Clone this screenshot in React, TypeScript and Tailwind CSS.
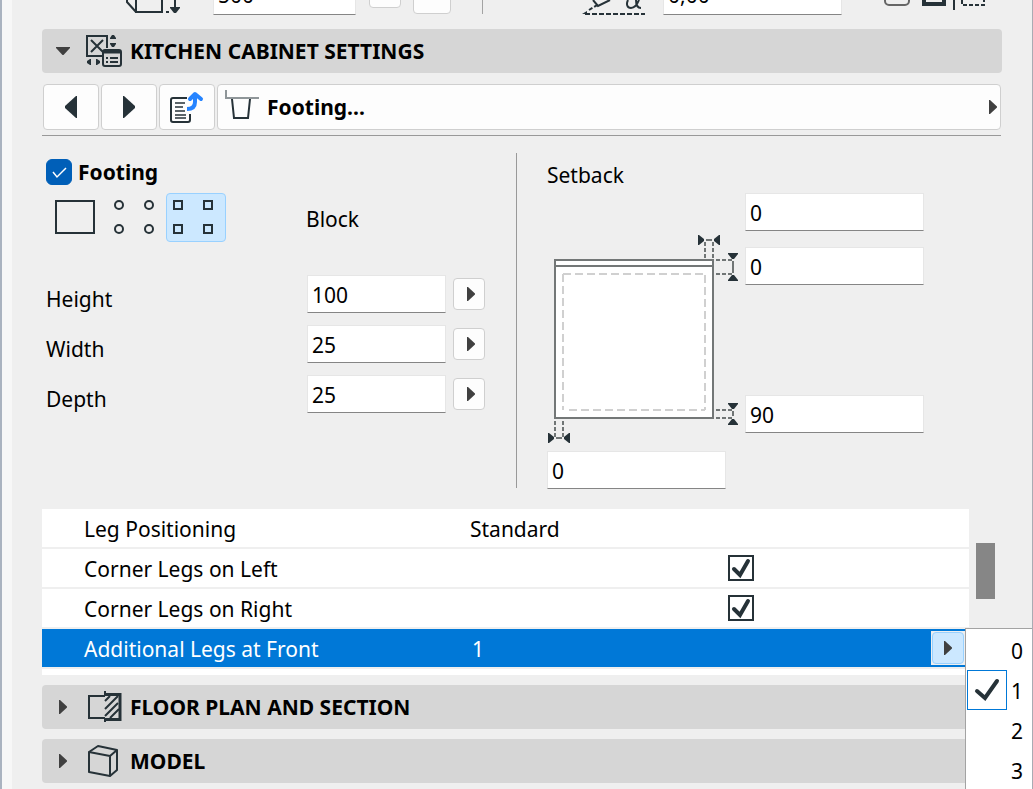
import { useState } from "react";
import type { ReactNode } from "react";

const INK = "#263238";

function Triangle({ dir }: { dir: "right" | "down" }) {
  return dir === "right" ? (
    <svg width="8" height="14" viewBox="0 0 8 14" className="shrink-0">
      <path d="M0 0h1l7 6.5v1L1 14H0z" fill="#404040" />
    </svg>
  ) : (
    <svg width="14" height="8" viewBox="0 0 14 8" className="shrink-0">
      <path d="M0 0v1l6.5 7h1L14 1V0z" fill="#404040" />
    </svg>
  );
}

function CabinetIcon() {
  return (
    <svg width="36" height="34" viewBox="0 0 36 34" fill="none" stroke={INK} strokeWidth="2">
      <path d="M16 22H1V2h20v12" />
      <path d="M5 6l12 12M17 6L5 18" />
      <path d="M24 5v-1l2-3h2l2 3v1zM24 9h6v1l-2 3h-2l-2-3z" fill={INK} stroke="none" />
      <path d="M5 25v6H4l-3-2v-2l3-2zM10 25v6h1l3-2v-2l-3-2z" fill={INK} stroke="none" />
      <rect x="17" y="16" width="18" height="16" rx="2" />
      <path d="M17 18h18" strokeWidth="3" />
      <path d="M20 24h2M24 24h8M20 28h2M24 28h8" />
    </svg>
  );
}

function FloorPlanIcon() {
  return (
    <svg width="36" height="34" viewBox="0 0 36 34" fill="none" stroke={INK} strokeWidth="2">
      <path d="M19 6H3v22h16" />
      <path d="M19 1v4M19 28v4" />
      <path d="M18 4.500h17M18 29.500h17" strokeWidth="3" />
      <path d="M34 3v28" strokeWidth="3" />
      <path d="M19 11l5-5M19 19L32 6M19 26l13-13M24 28l9-9" />
    </svg>
  );
}

function ModelIcon() {
  return (
    <svg width="36" height="34" viewBox="0 0 36 34" fill="none" stroke={INK} strokeWidth="2" strokeLinejoin="round">
      <path d="M3 8l21 4v20L3 28z" />
      <path d="M3 8l9-6 19 4-7 6M31 6v20l-7 6" />
    </svg>
  );
}

function SectionHeader({ title, icon, open = false }: { title: string; icon: ReactNode; open?: boolean }) {
  return (
    <button type="button" aria-expanded={open} className="flex h-11 w-full items-center rounded bg-[#d6d6d6] text-left">
      <span className="flex w-[42px] justify-center">
        <Triangle dir={open ? "down" : "right"} />
      </span>
      <span className="mr-2 ml-0.5 shrink-0">{icon}</span>
      <span className="leading-7 font-bold">{title}</span>
    </button>
  );
}

function NumberField({ label, id, value, className = "" }: { label: string; id: string; value: string; className?: string }) {
  return (
    <input
      id={id}
      aria-label={label}
      defaultValue={value}
      className={`block h-[38px] border border-[#e6e6e6] border-b-[#858585] bg-white px-1 pt-0.5 text-[21px] leading-7 outline-none ${className}`}
    />
  );
}

function SizeRow({ label, id, value }: { label: string; id: string; value: string }) {
  return (
    <div className="flex h-[38px] items-center">
      <label htmlFor={id} className="w-[261px] pt-2.5 leading-7">
        {label}
      </label>
      <NumberField id={id} label={label} value={value} className="w-[139px]" />
      <button
        type="button"
        aria-label={`${label} options`}
        className="ml-[7px] flex size-8 items-center justify-center rounded border border-[#cfcfcf] bg-[#fdfdfd] pl-1"
      >
        <Triangle dir="right" />
      </button>
    </div>
  );
}

// plan view of the cabinet with the four setback dimensions around it
function SetbackDrawing() {
  return (
    <svg width="198" height="258" viewBox="0 0 198 258" fill="none" className="shrink-0">
      <rect x="8" y="67" width="158" height="158" fill="#fff" stroke="#737777" strokeWidth="2" />
      <path d="M8 73h158" stroke="#737777" strokeWidth="2" />
      <path d="M16 81h142M16 81v136M158 82v135M22 217h136" stroke="#d0d0d0" strokeWidth="2" strokeDasharray="8 4" />
      <g stroke="#707575" strokeWidth="2" strokeDasharray="4 2">
        <path d="M158 49v16M166 49v16M169 67h16M169 81h16M169 217h16M169 225h16M8 228v16M16 228v16" />
      </g>
      <path d="M159 47h6M186 68v12M186 218v5M9 245h6" stroke="#707575" strokeWidth="2" />
      <g fill={INK}>
        <path d="M151 42h1l5 4v2l-5 4h-1zM173 42h-1l-5 4v2l5 4h1z" />
        <path d="M181 60h10v1l-4 5h-2l-4-5zM181 88h10v-1l-4-5h-2l-4 5z" />
        <path d="M181 210h10v1l-4 5h-2l-4-5zM181 232h10v-1l-4-5h-2l-4 5z" />
        <path d="M1 240h1l5 4v2l-5 4H1zM23 240h-1l-5 4v2l5 4h1z" />
      </g>
    </svg>
  );
}

function ShapePicker() {
  const [shape, setShape] = useState("Block");
  const shapes = [
    { name: "Full", art: <rect x="10" y="8" width="38" height="32" /> },
    {
      name: "Cylinder",
      art: (
        <>
          <circle cx="13" cy="12" r="4" />
          <circle cx="43" cy="12" r="4" />
          <circle cx="13" cy="36" r="4" />
          <circle cx="43" cy="36" r="4" />
        </>
      ),
    },
    { name: "Block", art: <path d="M8 8h8v8H8zM38 8h8v8h-8zM8 32h8v8H8zM38 32h8v8h-8z" /> },
  ];

  return (
    <div className="flex h-[49px] items-center">
      {shapes.map((s) => (
        <button
          key={s.name}
          type="button"
          aria-label={s.name}
          aria-pressed={shape === s.name}
          onClick={() => setShape(s.name)}
          className={`h-[49px] w-[60px] rounded-sm border ${shape === s.name ? "border-[#99d1ff] bg-[#cce8ff]" : "border-transparent"}`}
        >
          <svg width="58" height="47" viewBox="1 1 58 47" fill="none" stroke={INK} strokeWidth="2">
            {s.art}
          </svg>
        </button>
      ))}
      <span className="ml-20 pt-0.5 leading-7">{shape}</span>
    </div>
  );
}

function CheckRow({ label, id }: { label: string; id: string }) {
  return (
    <tr className="h-10">
      <td className="border-b-2 border-[#efefef] pt-0.5 pl-[42px]">
        <label htmlFor={id}>{label}</label>
      </td>
      <td className="border-b-2 border-[#efefef] pl-[258px]">
        <span className="relative block size-[26px]">
          <input id={id} type="checkbox" defaultChecked className="peer block size-[26px] appearance-none border-2 border-[#263238] bg-white" />
          <svg width="26" height="26" viewBox="0 0 26 26" className="pointer-events-none absolute inset-0 hidden peer-checked:block">
            <path d="M6 14l6 6L20 6" fill="none" stroke={INK} strokeWidth="4" strokeLinecap="round" />
          </svg>
        </span>
      </td>
    </tr>
  );
}

function CountMenu({ value, onPick }: { value: number; onPick: (n: number) => void }) {
  return (
    <div role="menu" className="absolute -top-[3px] left-full z-10 w-[67px] border-t border-l border-[#a3a3a3] bg-white pt-px pl-px text-black">
      {[0, 1, 2, 3].map((n) => (
        <button
          key={n}
          type="button"
          role="menuitemradio"
          aria-checked={n === value}
          onClick={() => onPick(n)}
          className="flex h-10 w-full items-center gap-1"
        >
          <span className={`flex size-10 items-center justify-center ${n === value ? "border border-[#0078d7]" : ""}`}>
            {n === value && (
              <svg width="26" height="24" viewBox="0 0 26 24">
                <path d="M3 13l8 7L23 3" fill="none" stroke={INK} strokeWidth="4" strokeLinecap="round" />
              </svg>
            )}
          </span>
          <span className="pt-0.5 leading-7">{n}</span>
        </button>
      ))}
    </div>
  );
}

export default function App() {
  const [frontLegs, setFrontLegs] = useState(1);

  return (
    <div className="flex min-h-screen overflow-hidden bg-[#efefef] font-['Noto_Sans','Open_Sans',sans-serif] text-[21px] text-black">
      <div className="w-0.5 shrink-0 bg-[#aab3c0]" />
      <div className="w-2.5 shrink-0 bg-[#f7f7f7]" />

      <main className="min-w-0 flex-1 px-[30px]">
        {/* Tail of the geometry panel, scrolled almost out of view */}
        <div className="flex h-[15px] items-end overflow-hidden">
          <svg width="60" height="15" viewBox="0 0 60 15" fill="none" stroke={INK} strokeWidth="2" className="ml-[82px] shrink-0">
            <path d="M12 0v12h26V0M3 0v2l9 10" />
            <path d="M42 12h3" />
            <path d="M51 0v8" />
            <path d="M46 7h10v1l-4 5h-2l-4-5z" fill={INK} stroke="none" />
          </svg>
          <NumberField id="geo-height" label="Object height" value="500" className="ml-[29px] w-[143px] shrink-0 pb-1" />
          <button type="button" aria-label="Link" className="mb-[7px] ml-[13px] h-8 w-8 shrink-0 rounded border border-[#cfcfcf] bg-[#fdfdfd]" />
          <button type="button" aria-label="More" className="mb-px ml-3 h-8 w-[38px] shrink-0 rounded border border-[#cfcfcf] bg-[#fdfdfd]" />
          <div className="mb-px ml-[31px] h-8 w-px shrink-0 bg-[#a3a3a3]" />
          <svg width="64" height="15" viewBox="0 0 64 15" fill="none" stroke={INK} strokeWidth="2" className="ml-[99px] shrink-0">
            <path d="M3 14h60" strokeDasharray="5 2" />
            <path d="M0 14l5-3v3z" fill={INK} stroke="none" />
            <path d="M7 10l10-6" strokeDasharray="4 2" />
            <path d="M11 0l5 6 12-6" />
            <path d="M57 0c-2 5-5 8-8 8-4 0-5-4-3-8M54 0c0 5 1 8 5 8" />
          </svg>
          <NumberField id="geo-angle" label="Angle" value="0,00" className="ml-[17px] w-[179px] shrink-0 pb-1" />
          <svg width="102" height="15" viewBox="0 0 102 15" fill="none" stroke={INK} strokeWidth="2" className="ml-[42px] shrink-0">
            <path d="M1 0v1a4 4 0 0 0 4 4h16a4 4 0 0 0 4-4V0" stroke="#666" />
            <path d="M40 0v4h20V0" strokeWidth="4" />
            <path d="M70 0v10" />
            <path d="M78 0v5h22V0" strokeDasharray="4 2" />
          </svg>
        </div>

        <div className="mt-[14px]">
          <SectionHeader title="KITCHEN CABINET SETTINGS" icon={<CabinetIcon />} open />
        </div>

        {/* Page navigation */}
        <nav className="mt-[11px] mr-px flex h-[52px] gap-0.5 border-b border-[#999] pl-px">
          <button type="button" aria-label="Previous page" className="flex h-[46px] w-14 shrink-0 items-center justify-center rounded border border-[#cfcfcf] bg-[#fdfdfd]">
            <svg width="12" height="22" viewBox="0 0 12 22">
              <path d="M12 0v22h-1L0 12v-2L11 0z" fill={INK} />
            </svg>
          </button>
          <button type="button" aria-label="Next page" className="flex h-[46px] w-14 shrink-0 items-center justify-center rounded border border-[#cfcfcf] bg-[#fdfdfd]">
            <svg width="12" height="22" viewBox="0 0 12 22">
              <path d="M0 0v22h1l11-10v-2L1 0z" fill={INK} />
            </svg>
          </button>
          <button type="button" aria-label="Go to page" className="flex h-[46px] w-14 shrink-0 items-center justify-center rounded border border-[#cfcfcf] bg-[#fdfdfd]">
            <svg width="34" height="32" viewBox="0 0 34 32" fill="none" stroke={INK} strokeWidth="2">
              <path d="M17 7H3a2 2 0 0 0-2 2v20a2 2 0 0 0 2 2h15a2 2 0 0 0 2-2v-6" />
              <path d="M5 12h10M5 16h8M5 20h10M5 24h11M5 27h11" strokeWidth="1.500" />
              <path d="M17 18c6 0 8-3 8-7V5" stroke="#2684ff" strokeWidth="4" />
              <path d="M20 8l5-5 6 5" stroke="#2684ff" strokeWidth="4" strokeLinecap="round" strokeLinejoin="round" />
            </svg>
          </button>
          <button type="button" className="flex h-[46px] min-w-0 flex-1 items-center rounded border border-[#cfcfcf] bg-[#fdfdfd] pr-[3px] pl-[7px] text-left">
            <svg width="34" height="34" viewBox="0 0 34 34" fill="none" strokeWidth="2" className="shrink-0">
              <path d="M7 9l2 19h14l2-19" stroke={INK} />
              <path d="M1 0v8h33" stroke="#8f9699" />
            </svg>
            <span className="ml-2 flex-1 leading-7 font-bold">Footing...</span>
            <Triangle dir="right" />
          </button>
        </nav>

        <section className="mt-[17px] flex">
          <div className="h-[335px] w-[475px] shrink-0 border-r border-[#999] pt-[6px] pl-1">
            <div className="flex h-[26px] items-center gap-1.5">
              <span className="relative block size-[26px] shrink-0">
                <input id="footing" type="checkbox" defaultChecked className="block size-[26px] appearance-none rounded-md border border-[#888] bg-white checked:border-[#005fb8] checked:bg-[#005fb8]" />
                <svg width="26" height="26" viewBox="0 0 26 26" className="pointer-events-none absolute inset-0">
                  <path d="M7 13l4 5 9-9" fill="none" stroke="#fff" strokeWidth="1.500" />
                </svg>
              </span>
              <label htmlFor="footing" className="leading-7 font-bold">
                Footing
              </label>
            </div>

            <div className="mt-2">
              <ShapePicker />
            </div>

            <div className="mt-[33px] flex flex-col gap-3">
              <SizeRow id="height" label="Height" value="100" />
              <SizeRow id="width" label="Width" value="25" />
              <SizeRow id="depth" label="Depth" value="25" />
            </div>
          </div>

          <div className="pt-2 pl-[30px]">
            <h3 className="leading-7">Setback</h3>
            <div className="mt-1 flex">
              <SetbackDrawing />
              <div className="flex flex-col">
                <NumberField id="setback-right" label="Setback right" value="0" className="w-[179px]" />
                <NumberField id="setback-back" label="Setback back" value="0" className="mt-4 w-[179px]" />
                <NumberField id="setback-front" label="Setback front" value="90" className="mt-[110px] w-[179px]" />
              </div>
            </div>
            <NumberField id="setback-left" label="Setback left" value="0" className="w-[179px]" />
          </div>
        </section>

        {/* Leg parameters */}
        <div className="mt-5 flex">
          <div className="min-w-0 flex-1 bg-white pb-[6px]">
            <table className="w-full table-fixed border-separate border-spacing-0 leading-7">
              <colgroup>
                <col className="w-[428px]" />
                <col />
              </colgroup>
              <tbody>
                <tr className="h-10">
                  <td className="border-b-2 border-[#efefef] pt-0.5 pl-[42px]">Leg Positioning</td>
                  <td className="border-b-2 border-[#efefef] pt-0.5">Standard</td>
                </tr>
                <CheckRow id="legs-left" label="Corner Legs on Left" />
                <CheckRow id="legs-right" label="Corner Legs on Right" />
                <tr className="h-10 text-white">
                  <td className="border-b-2 border-[#efefef] bg-[#0078d7] bg-clip-padding pt-0.5 pl-[42px]">Additional Legs at Front</td>
                  <td className="border-b-2 border-[#efefef] bg-[#0078d7] bg-clip-padding pr-1">
                    <div className="flex items-center justify-between pl-0.5">
                      <span className="pt-0.5">{frontLegs}</span>
                      <div className="relative bg-[#efefef] p-px">
                        <button
                          type="button"
                          aria-label="Choose number of legs"
                          aria-haspopup="menu"
                          className="flex size-8 items-center justify-center rounded border border-[#99d1ff] bg-[#cce8ff]"
                        >
                          <Triangle dir="right" />
                        </button>
                        <CountMenu value={frontLegs} onPick={setFrontLegs} />
                      </div>
                    </div>
                  </td>
                </tr>
              </tbody>
            </table>
          </div>
          <div className="w-[33px] shrink-0 pt-[34px] pl-[7px]">
            <div className="h-14 w-[19px] bg-[#868686]" />
          </div>
        </div>

        <div className="mt-2.5 flex flex-col gap-2.5">
          <SectionHeader title="FLOOR PLAN AND SECTION" icon={<FloorPlanIcon />} />
          <SectionHeader title="MODEL" icon={<ModelIcon />} />
        </div>
      </main>

      <div className="w-px shrink-0 bg-[#a9abb3]" />
    </div>
  );
}
